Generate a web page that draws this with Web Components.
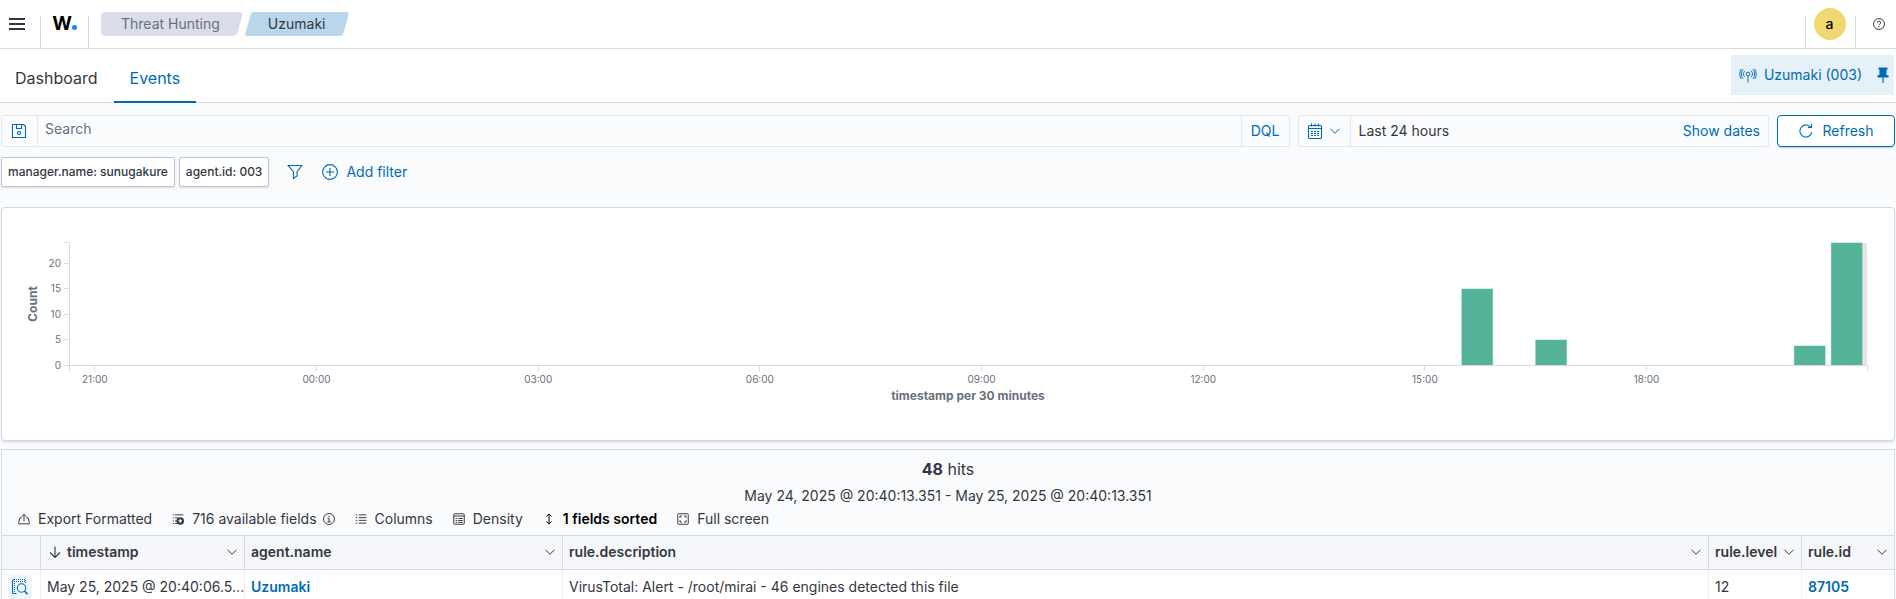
<!DOCTYPE html>
<html lang="en">
<head>
<meta charset="utf-8">
<title>Threat Hunting - Events</title>
<style>
  :root {
    --primary: #006bb4;
    --text: #343741;
    --muted: #69707d;
    --line: #d3dae6;
    --page: #fafbfd;
  }
  body {
    margin: 0;
    background: var(--page);
    color: var(--text);
    font: 14px/20px Inter, "Liberation Sans", sans-serif;
    overflow: hidden;
    height: 100vh;
  }
</style>
</head>
<body>
<threat-hunting-app></threat-hunting-app>

<script>
const base = `<style>
  *, *::before, *::after { box-sizing: border-box; }
  button { font: inherit; color: inherit; background: none; border: 0; padding: 0; margin: 0; cursor: pointer; white-space: nowrap; }
  a { color: inherit; text-decoration: none; }
</style>`;

function define(name, html, setup) {
  const template = document.createElement('template');
  template.innerHTML = base + html;
  customElements.define(name, class extends HTMLElement {
    constructor() {
      super();
      this.attachShadow({ mode: 'open' }).append(template.content.cloneNode(true));
    }
    connectedCallback() { if (setup) setup(this, this.shadowRoot); }
  });
}

/* Icons, all on a 16 unit grid */
const icons = {
  menu: '<path fill="currentColor" d="M0 2h16v2H0zM0 7h16v2H0zM0 12h16v2H0z"/>',
  help: '<circle cx="8" cy="8" r="7.300"/><path d="M5.800 6.300A2.200 2.200 0 1 1 9 8.200c-.7.4-1 .8-1 1.500"/><path d="M8 11v1.600"/>',
  save: '<path d="M1.500 1.500h11l2 2v11h-13z"/><path d="M5.500 1.500v4h5v-4"/><circle cx="8" cy="10" r="1.500"/>',
  calendar: '<rect x="1.500" y="2.500" width="13" height="13" rx="1"/><path d="M1.500 5.500h13M4.500.5v3M8 .5v3M11.500.5v3"/><path stroke-dasharray="2 1" d="M4 8.500h8M4 10.500h8M4 12.500h8"/>',
  chevron: '<path d="M2 5l6 6 6-6"/>',
  refresh: '<path d="M13.800 9.200A6 6 0 1 1 11.500 3.200l2 1.300"/><path d="M13.500.8v3.700H10"/>',
  filter: '<path d="M1.200 1.500h13.600L10 8v4l-3.500 2.500V8z"/>',
  plus: '<circle cx="8" cy="8" r="7.400"/><path d="M8 4v8M4 8h8"/>',
  antenna: '<g stroke-width=".95"><circle cx="8" cy="7" r="1.800"/><path d="M8 9v6.500M5 10.200C3 8.500 3 5.500 5 3.800M11 10.200c2-1.700 2-4.700 0-6.400M3 11.700C.9 9 .9 5 3 2.300M13 11.700c2.100-2.700 2.100-6.700 0-9.400M1.300 12C-.7 9-.7 5 1.300 2M14.700 12c2-3 2-7 0-10"/></g>',
  pin: '<path fill="currentColor" stroke="none" d="M3.500.5h9v2h-1v5.500l2 .5v2H8.600V16H7.400v-5.500h-5v-2l2-.5V2.500h-.9z"/>',
  exportIcon: '<path d="M5 6.500H2.500l-1.500 6V14.500h14v-2l-1.500-6H11M8 11V2M4.800 5 8 1.800 11.200 5"/>',
  fields: '<path stroke-dasharray="1.500 1.500 12" d="M1 2.500h14M1 6.500h7M1 10.500h6M1 14h6"/><circle cx="11" cy="10.500" r="5" fill="currentColor" stroke="none"/><path stroke="#fff" stroke-width="1.500" d="M11 8v5M8.500 10.500h5"/>',
  info: '<circle cx="8" cy="8" r="7.300"/><circle cx="8" cy="4.500" r=".9" fill="currentColor" stroke="none"/><path d="M6 7.200h2v4.600M5.800 11.800h4.700"/>',
  list: '<path d="M1 2.500h2M1 6.200h2M1 9.800h2M1 13.500h2M5 2.500h10M5 6.200h10M5 9.800h10M5 13.500h10"/>',
  density: '<rect x="1" y="1" width="14" height="14" rx="1"/><path d="M1 4h14M3.500 7.300h2M3.500 10h2M3.500 12.500h2M7 7.300h6M7 10h6M7 12.500h6"/>',
  sort: '<path d="M8 1.500v13M4.500 4.800 8 1.300l3.500 3.500M4.500 11.200 8 14.700l3.500-3.500"/>',
  full: '<rect x="1" y="1" width="14" height="14" rx="1"/><path d="M4 6.500V4h2.500M9.500 4H12v2.500M12 9.500V12H9.500M6.500 12H4V9.500"/>',
  down: '<path d="M8 2.500v11M3 8.500l5 5 5-5"/>',
  inspect: '<path d="M4.500 14.500h-3a1 1 0 0 1-1-1V2.500a2 2 0 0 1 2-2H3"/><path stroke-dasharray="1 1" d="M4 .5h10M2.500 2v11M4 2.500h10M13.500 1v4"/><circle cx="9.500" cy="9" r="4.200"/><path stroke-width="1.600" d="M12.500 12l3 3.200"/>'
};
define('ui-icon', `<style>
  :host { display: inline-block; width: 16px; height: 16px; flex: none; }
  :host([size="12"]) { width: 12px; height: 12px; }
  svg { display: block; width: 100%; height: 100%; fill: none; stroke: currentColor; stroke-width: 1.100; overflow: visible; }
  :host([size="12"]) svg { stroke-width: 1.300; }
  :host([name="menu"]) svg { stroke: none; }
</style><svg viewBox="0 0 16 16" aria-hidden="true"></svg>`,
(el, root) => { root.querySelector('svg').innerHTML = icons[el.getAttribute('name')]; });

define('bread-crumb', `<style>
  :host { display: block; color: var(--muted); --fill: #d9deea; }
  :host([current]) { color: var(--text); --fill: #b9d6ea; }
  a { display: block; position: relative; isolation: isolate; height: 24px; line-height: 24px; padding: 0 20px; }
  a::before, a::after { content: ""; position: absolute; inset: 0; z-index: -1; background: var(--fill); border-radius: 4px; }
  a::before { right: 50%; }
  a::after { left: 20%; transform: skewX(-16deg); }
  :host([current]) a::before { display: none; }
  :host([current]) a::after { left: 0; border-radius: 3px; }
</style><a href="#"><slot></slot></a>`);

define('app-header', `<style>
  :host { display: flex; align-items: center; height: 49px; background: #fff; border-bottom: 1px solid var(--line); }
  .cell { height: 32px; align-self: flex-end; border-right: 1px solid var(--line); display: flex; justify-content: center; }
  .menu { width: 41px; padding: 0 6px 16px 0; align-items: center; }
  .menu button, .help button { display: flex; }
  .brand { width: 48px; padding-bottom: 16px; align-items: center; }
  .brand a { display: flex; align-items: baseline; font-size: 19px; font-weight: 700; line-height: 16px; color: #000; }
  .brand i { width: 5px; height: 5px; border-radius: 50%; background: #1a83ff; }
  nav { display: flex; gap: 8px; margin-left: 12px; }
  .right { margin-left: auto; display: flex; align-self: stretch; }
  .user { border-left: 1px solid var(--line); width: 51px; padding-right: 2px; }
  .avatar { width: 32px; height: 32px; margin-top: -8px; border-radius: 50%; background: #f1d86f; color: #000; font-weight: 500; }
  .help { width: 40px; display: flex; align-items: center; padding-left: 17px; }
</style>
<div class="cell menu"><button aria-label="Toggle navigation"><ui-icon name="menu"></ui-icon></button></div>
<div class="cell brand"><a href="#">W<i></i></a></div>
<nav aria-label="Breadcrumbs"><bread-crumb>Threat Hunting</bread-crumb><bread-crumb current>Uzumaki</bread-crumb></nav>
<div class="right">
  <div class="cell user"><button class="avatar">a</button></div>
  <div class="help"><button aria-label="Help"><ui-icon name="help" size="12"></ui-icon></button></div>
</div>`);

define('view-tabs', `<style>
  :host { display: flex; justify-content: space-between; height: 54px; background: #fff; border-bottom: 1px solid var(--line); }
  .tabs { display: flex; margin-bottom: -1px; }
  .tabs button { padding: 6px 16px 0; font-size: 16px; line-height: 24px; border-bottom: 2px solid transparent; }
  .tabs .dash { padding-left: 15px; }
  .tabs .on { color: var(--primary); border-color: var(--primary); }
  .agent { display: flex; height: 40px; margin: 6px 2px 0 0; background: #e6f0f7; color: var(--primary); align-items: center; }
  .agent button { display: flex; align-items: center; gap: 8px; height: 40px; padding: 0 0 0 9px; }
  .agent .pin { padding: 0 3px 0 13px; }
</style>
<div class="tabs" role="tablist"><button role="tab" class="dash">Dashboard</button><button role="tab" class="on" aria-selected="true">Events</button></div>
<div class="agent"><button><ui-icon name="antenna"></ui-icon>Uzumaki (003)</button><button class="pin" aria-label="Unpin agent"><ui-icon name="pin"></ui-icon></button></div>`);

define('query-bar', `<style>
  :host { display: flex; gap: 8px; height: 32px; margin: 12px 1px 0; color: var(--primary); }
  .box { display: flex; border: 1px solid #e3e7ef; border-radius: 2px; background: #fbfcfd; }
  .search { flex: 1; }
  .search > button:first-child { width: 36px; display: flex; align-items: center; padding-left: 9px; border-right: 1px solid #e3e7ef; }
  input { flex: 1; min-width: 0; border: 0; outline: 0; background: none; font: inherit; color: var(--text); padding: 0 7px 4px; }
  input::placeholder { color: var(--muted); opacity: 1; }
  .lang { width: 48px; border-left: 1px solid #e3e7ef; }
  .time { width: calc(25% - 2px); }
  .quick { width: 52px; display: flex; align-items: center; justify-content: center; gap: 6px; border-right: 1px solid #e3e7ef; }
  .range { flex: 1; text-align: left; padding-left: 8px; color: var(--text); }
  .show { padding-right: 8px; }
  .refresh { width: 118px; display: flex; align-items: center; justify-content: center; gap: 8px; border: 1px solid var(--primary); border-radius: 4px; background: #fff; box-shadow: 0 2px 2px -1px rgba(0, 107, 180, .3); }
</style>
<div class="box search"><button aria-label="Saved queries"><ui-icon name="save"></ui-icon></button><input aria-label="Search" placeholder="Search"><button class="lang">DQL</button></div>
<div class="box time"><button class="quick" aria-label="Quick dates"><ui-icon name="calendar"></ui-icon><ui-icon name="chevron" size="12"></ui-icon></button><button class="range">Last 24 hours</button><button class="show">Show dates</button></div>
<button class="refresh"><ui-icon name="refresh"></ui-icon>Refresh</button>`);

define('filter-bar', `<style>
  :host { display: flex; align-items: center; gap: 4px; height: 30px; margin: 10px 1px 0; color: var(--primary); }
  .badge { height: 30px; padding: 0 6px; font-size: 12px; font-weight: 500; color: var(--text); background: #fff; border: 1px solid #bfc5d4; border-radius: 2px; box-shadow: 0 1px 2px rgba(60, 70, 100, .15); }
  .funnel { display: flex; padding: 0 15px 0 14px; }
  .add { display: flex; align-items: center; gap: 8px; }
</style>
<button class="badge">manager.name: sunugakure</button><button class="badge">agent.id: 003</button>
<button class="funnel" aria-label="Change all filters"><ui-icon name="filter"></ui-icon></button>
<button class="add"><ui-icon name="plus"></ui-icon>Add filter</button>`);

/* Time axis runs from 20:40 to 21:00 on the next day, in minutes */
define('events-histogram', `<style>
  :host { display: block; height: 234px; margin: 20px 1px 0; padding: 34px 27px 0 67px; background: #fff; border: 1px solid var(--line); border-radius: 4px; box-shadow: 0 2px 3px -1px rgba(100, 120, 170, .3); }
  svg { display: block; width: 100%; height: 150px; overflow: visible; font-size: 10px; fill: var(--muted); }
  line { stroke: #d9dbdd; shape-rendering: crispEdges; }
  .bar { fill: #54b399; stroke: #54b399; stroke-opacity: .5; }
  .title { font-size: 12px; font-weight: 700; }
</style><svg role="img" aria-label="Count of events per 30 minutes"></svg>`,
(el, root) => {
  const span = 1460, height = 123, max = 24;
  const x = m => (m / span * 100) + '%';
  const y = v => Math.round(height - v / max * height);
  let out = `<rect x="${x(1440)}" y="1" width="${x(20)}" height="${height - 1}" fill="#e4e4e5"/>`;
  for (const [m, v] of [[1130, 15], [1190, 5], [1400, 4], [1430, 24]])
    out += `<rect class="bar" x="${x(m + 1)}" y="${y(v) + 1}" width="${x(25)}" height="${height - y(v) - 1}"/>`;
  out += `<line x1="0" x2="0" y1="0" y2="${height + 6}"/><line x1="100%" x2="100%" y1="${height}" y2="${height + 6}"/>`;
  out += `<line x1="-5" x2="100%" y1="${height}" y2="${height}"/><line x1="-5" x2="0" y1="0" y2="0"/>`;
  for (const v of [0, 5, 10, 15, 20])
    out += `<line x1="-5" x2="0" y1="${y(v)}" y2="${y(v)}"/><text x="-8" y="${y(v) + 4}" text-anchor="end">${v}</text>`;
  ['21:00', '00:00', '03:00', '06:00', '09:00', '12:00', '15:00', '18:00'].forEach((label, i) => {
    const m = 21 + i * 180;
    out += `<line x1="${x(m)}" x2="${x(m)}" y1="${height}" y2="${height + 6}"/><text x="${x(m)}" y="${height + 18}" text-anchor="middle">${label}</text>`;
  });
  out += `<text class="title" x="50%" y="${height + 35}" text-anchor="middle">timestamp per 30 minutes</text>`;
  out += `<text class="title" transform="rotate(-90)" x="-62" y="-32" text-anchor="middle">Count</text>`;
  root.querySelector('svg').innerHTML = out;
});

define('hits-grid', `<style>
  :host { display: block; margin: 8px 1px 0; border: 1px solid var(--line); }
  .summary { text-align: center; }
  h2 { margin: 7px 0 0; font-size: 16px; line-height: 24px; font-weight: 400; }
  p { margin: 5px 0 0; line-height: 20px; }
  .tools { display: flex; align-items: center; height: 29px; gap: 20px; padding: 0 16px 3px; }
  .tools button { display: flex; align-items: center; gap: 8px; }
  .tools .sorted { color: #000; font-weight: 600; }
  .tools .count { gap: 6px; }
  .tools .count ui-icon:first-child { margin-right: 2px; }
  table { width: 100%; table-layout: fixed; border-collapse: separate; border-spacing: 0; }
  th { height: 35px; padding: 0 6px 2px; text-align: left; font-weight: 600; background: #f5f7fa; border: solid var(--line); border-width: 1px 1px 1px 0; }
  th button { display: flex; width: 100%; align-items: center; gap: 4px; }
  th ui-icon:last-child { margin-left: auto; }
  td { height: 34px; padding: 0 6px; background: #fff; border-right: 1px solid #edf0f5; white-space: nowrap; }
  th:last-child, td:last-child { border-right: 0; }
  td a { color: var(--primary); font-weight: 600; }
  td button { display: grid; place-items: center; width: 24px; height: 24px; border-radius: 4px; background: #f0f5fa; color: var(--primary); }
  .c1 { width: 39px; } .c2 { width: 204px; } .c3 { width: 318px; } .c5 { width: 93px; } .c6 { width: 92px; }
</style>
<div class="summary"><h2><strong>48</strong> hits</h2><p>May 24, 2025 @ 20:40:13.351 - May 25, 2025 @ 20:40:13.351</p></div>
<div class="tools">
  <button><ui-icon name="exportIcon" size="12"></ui-icon>Export Formatted</button>
  <button class="count"><ui-icon name="fields" size="12"></ui-icon>716 available fields<ui-icon name="info" size="12"></ui-icon></button>
  <button><ui-icon name="list" size="12"></ui-icon>Columns</button>
  <button><ui-icon name="density" size="12"></ui-icon>Density</button>
  <button class="sorted"><ui-icon name="sort" size="12"></ui-icon>1 fields sorted</button>
  <button><ui-icon name="full" size="12"></ui-icon>Full screen</button>
</div>
<table>
  <colgroup><col class="c1"><col class="c2"><col class="c3"><col><col class="c5"><col class="c6"></colgroup>
  <thead><tr>
    <th aria-label="Inspect"></th>
    <th><button><ui-icon name="down"></ui-icon>timestamp<ui-icon name="chevron" size="12"></ui-icon></button></th>
    <th><button>agent.name<ui-icon name="chevron" size="12"></ui-icon></button></th>
    <th><button>rule.description<ui-icon name="chevron" size="12"></ui-icon></button></th>
    <th><button>rule.level<ui-icon name="chevron" size="12"></ui-icon></button></th>
    <th><button>rule.id<ui-icon name="chevron" size="12"></ui-icon></button></th>
  </tr></thead>
  <tbody><tr>
    <td><button aria-label="Inspect document details"><ui-icon name="inspect"></ui-icon></button></td>
    <td>May 25, 2025 @ 20:40:06.5…</td>
    <td><a href="#">Uzumaki</a></td>
    <td>VirusTotal: Alert - /root/mirai - 46 engines detected this file</td>
    <td>12</td>
    <td><a href="#">87105</a></td>
  </tr></tbody>
</table>`);

define('threat-hunting-app', `<style>:host { display: block; }</style>
<app-header></app-header><view-tabs></view-tabs><query-bar></query-bar><filter-bar></filter-bar><events-histogram></events-histogram><hits-grid></hits-grid>`);
</script>
</body>
</html>
